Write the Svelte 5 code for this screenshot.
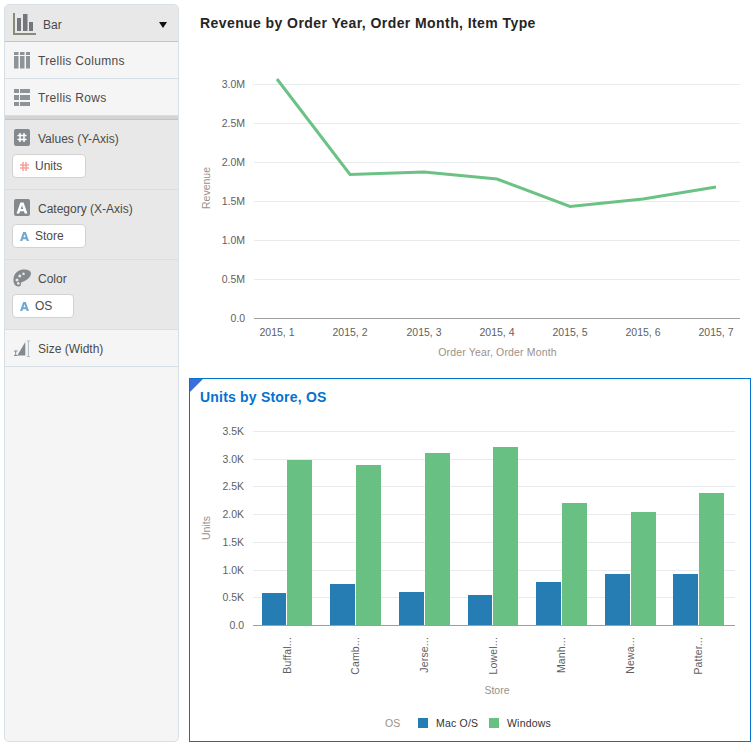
<script>
  const lineTicks = [['3.0M',84],['2.5M',123],['2.0M',162],['1.5M',201],['1.0M',240],['0.5M',279]];
  const linePts = [[277,79],[350,174.5],[424,172],[497,179],[570,206.5],[643,199],[716,187]];
  const lineLabels = ['2015, 1','2015, 2','2015, 3','2015, 4','2015, 5','2015, 6','2015, 7'];
  const barTicks = [['3.5K',431],['3.0K',459],['2.5K',486],['2.0K',514],['1.5K',542],['1.0K',570],['0.5K',597]];
  const stores = [
    {n:'Buffal...',x:262,w:24,b:593,g:460},
    {n:'Camb...',x:330,w:25,b:584,g:465},
    {n:'Jerse...',x:399,w:25,b:592,g:453},
    {n:'Lowel...',x:468,w:24,b:595,g:447},
    {n:'Manh...',x:536,w:25,b:582,g:503},
    {n:'Newa...',x:605,w:25,b:574,g:512},
    {n:'Patter...',x:673,w:25,b:574,g:493}
  ];
  const base = 625;
  const letterA = 'M0 9 3.2 0h2.6L9 9H6.700L6.100 7.200H2.900L2.300 9zM3.500 5.300h2L4.500 2.300z';
</script>

<div class="page">
  <aside class="side">
    <div class="head">
      <svg width="24" height="24" viewBox="0 0 24 24">
        <path d="M2 1v21h22" fill="none" stroke="#8a8a78" stroke-width="2"/>
        <path d="M5 6h4v13H5zM11 2h4.500v17H11zM17 10h4v9h-4z" fill="#73777c"/>
      </svg>
      <span class="head-t">Bar</span>
      <span class="caret"></span>
    </div>
    <div class="row">
      <svg width="16" height="17" viewBox="0 0 16 17" fill="#8d9396"><path d="M0 0h4.500v3H0zM6 0h4.500v3H6zM12 0h4v3h-4zM0 4h4.500v12.500H0zM6 4h4.500v12.500H6zM12 4h4v12.500h-4z"/></svg>
      <span class="wide">Trellis Columns</span>
    </div>
    <div class="row">
      <svg width="16" height="17" viewBox="0 0 16 17" fill="#8d9396"><path d="M0 0h5v4H0zM6 0h10v4H6zM0 6h5v5H0zM6 6h10v5H6zM0 13h5v4H0zM6 13h10v4H6z"/></svg>
      <span class="wide">Trellis Rows</span>
    </div>
    <div class="sep"></div>
    <div class="well">
      <div class="well-t">
        <svg width="16" height="17" viewBox="0 0 16 17"><rect width="16" height="17" rx="2" fill="#84898e"/><path d="M6 4v9M10 4v9M3.500 6.500h9M3.500 10.500h9" stroke="#fff" stroke-width="1.500"/></svg>
        <span>Values (Y-Axis)</span>
      </div>
      <div class="pill w74">
        <svg width="9" height="9" viewBox="0 0 9 9"><path d="M3 0v9M6 0v9M0 3h9M0 6h9" stroke="#f5a49a" stroke-width="1.600"/></svg>
        <span>Units</span>
      </div>
    </div>
    <div class="well">
      <div class="well-t">
        <svg width="16" height="17" viewBox="0 0 16 17"><rect width="16" height="17" rx="2" fill="#84898e"/><path d={letterA} transform="translate(2.500 3.500) scale(1.220)" fill="#fff" fill-rule="evenodd"/></svg>
        <span>Category (X-Axis)</span>
      </div>
      <div class="pill w74">
        <svg width="9" height="9" viewBox="0 0 9 9"><path d={letterA} fill="#6fa8d3" fill-rule="evenodd"/></svg>
        <span>Store</span>
      </div>
    </div>
    <div class="well">
      <div class="well-t">
        <svg class="pal" width="18" height="18" viewBox="0 0 18 18">
          <path fill-rule="evenodd" fill="#84898e" d="M11 .5C6.500.5 2 3 .8 8c-1 4.500 0 9.500 4.700 9.500 2.500 0 2.200-1.700 2.500-3 .3-1.500 1.500-1.500 3-2.200 3-1.200 7-4.300 7-8C18 2 15 .5 11 .5zM6.800 5.500a1.500 1.500 0 1 0 .01 0zM4 9.500a1.500 1.500 0 1 0 .01 0zM5.300 13a1.400 1.400 0 1 0 .01 0zM10.500 3.500a1.300 1.300 0 1 0 .01 0z"/>
        </svg>
        <span>Color</span>
      </div>
      <div class="pill w62">
        <svg width="9" height="9" viewBox="0 0 9 9"><path d={letterA} fill="#6fa8d3" fill-rule="evenodd"/></svg>
        <span>OS</span>
      </div>
    </div>
    <div class="row">
      <svg width="16" height="17" viewBox="0 0 16 17"><path d="M3.300 15.500 11.300 2v13.500z" fill="#84898e"/><path d="M12.800 1h3.200M14.400 1v15.500M12.800 16.500h3.200" stroke="#a9bcc6" fill="none"/><path d="M0 11h3.500M1.700 11v4.500M0 15.500h3.500" stroke="#84898e" fill="none"/></svg>
      <span>Size (Width)</span>
    </div>
  </aside>

  <main class="main">
    <section class="chart top">
      <h2 class="title">Revenue by Order Year, Order Month, Item Type</h2>
      <svg class="plot" width="566" height="378" viewBox="189 0 566 378">
        {#each lineTicks as t}
          <line x1="254" x2="740" y1={t[1]+0.5} y2={t[1]+0.5} class="grid"/>
          <text x="245" y={t[1]+4} class="tick" text-anchor="end">{t[0]}</text>
        {/each}
        <text x="245" y="322" class="tick" text-anchor="end">0.0</text>
        <line x1="254" x2="740" y1="318.500" y2="318.500" class="axis"/>
        <polyline points={linePts.map(p=>p.join(',')).join(' ')} fill="none" stroke="#6cc284" stroke-width="3"/>
        {#each lineLabels as l, i}
          <text x={linePts[i][0]} y="336" class="tick" text-anchor="middle">{l}</text>
        {/each}
        <text x="497.500" y="356" class="atitle wideT" text-anchor="middle">Order Year, Order Month</text>
        <text transform="translate(210 188) rotate(-90)" class="atitle" text-anchor="middle">Revenue</text>
      </svg>
    </section>

    <section class="chart panel">
      <span class="corner"></span>
      <h2 class="title blue">Units by Store, OS</h2>
      <svg class="plot" width="566" height="368" viewBox="189 378 566 368">
        {#each barTicks as t}
          <line x1="253" x2="735" y1={t[1]+0.5} y2={t[1]+0.5} class="grid"/>
          <text x="244" y={t[1]+4} class="tick" text-anchor="end">{t[0]}</text>
        {/each}
        <text x="244" y="629" class="tick" text-anchor="end">0.0</text>
        {#each stores as s}
          <rect x={s.x} y={s.b} width={s.w} height={base-s.b} fill="#267db3"/>
          <rect x={s.x+s.w+1} y={s.g} width="25" height={base-s.g} fill="#68c182"/>
          <text transform="translate({s.x+29} 637) rotate(-90)" class="tick wideT" text-anchor="end">{s.n}</text>
        {/each}
        <line x1="253" x2="735" y1="625.500" y2="625.500" class="axis"/>
        <text x="497" y="694" class="atitle" text-anchor="middle">Store</text>
        <text transform="translate(210 528) rotate(-90)" class="atitle" text-anchor="middle">Units</text>
        <text x="385" y="727" class="atitle">OS</text>
        <rect x="418" y="718" width="10" height="10" fill="#267db3"/>
        <text x="436" y="727" class="legend">Mac O/S</text>
        <rect x="489" y="718" width="10" height="10" fill="#68c182"/>
        <text x="507" y="727" class="legend">Windows</text>
      </svg>
    </section>
  </main>
</div>

<style>
  :global(body) { margin: 0; background: #fff; }
  .page {
    width: 755px;
    height: 746px;
    display: flex;
    box-sizing: border-box;
    padding: 4px 0 4px 4px;
    font-family: "Liberation Sans", Arial, sans-serif;
    overflow: hidden;
  }
  .side {
    width: 175px;
    height: 738px;
    box-sizing: border-box;
    border: 1px solid #d6dfe6;
    border-radius: 5px;
    background: #f5f5f5;
    overflow: hidden;
    flex: none;
    font-size: 12px;
    color: #4a4a4a;
  }
  .head {
    height: 37px;
    box-sizing: border-box;
    background: #e8e8e8;
    border-bottom: 1px solid #c4c4c4;
    display: flex;
    align-items: center;
    padding: 0 11px 0 7px;
  }
  .head-t { margin-left: 7px; flex: 1; padding-top: 4px; }
  .head svg { margin-top: 1px; }
  .caret {
    width: 0;
    height: 0;
    border-left: 4.500px solid transparent;
    border-right: 4.500px solid transparent;
    border-top: 6px solid #111;
    margin-top: 4px;
  }
  .row {
    height: 37px;
    box-sizing: border-box;
    border-bottom: 1px solid #d6dfe6;
    display: flex;
    align-items: center;
    gap: 8px;
    padding: 0 0 0 9px;
  }
  .row span { padding-top: 2px; }
  .row span.wide { letter-spacing: 0.3px; }
  .sep {
    height: 4px;
    box-sizing: border-box;
    background: #d4d4d4;
    border-bottom: 1px solid #c4c4c4;
  }
  .well {
    height: 70px;
    box-sizing: border-box;
    background: #e8e8e8;
    border-bottom: 1px solid #d6dfe6;
    padding: 9px 0 0 7px;
  }
  .well-t {
    display: flex;
    align-items: center;
    gap: 8px;
    height: 17px;
    padding-left: 2px;
  }
  .well-t span { padding-top: 2px; }
  .pal { margin: 0 -1px 0 -1px; flex: none; }
  .pill {
    margin-top: 8px;
    height: 24px;
    box-sizing: border-box;
    background: #fff;
    border: 1px solid #d2d2d2;
    border-radius: 4px;
    display: flex;
    align-items: center;
    gap: 6px;
    padding: 0 0 0 7px;
  }
  .pill svg { flex: none; margin-left: 0; }
  .w74 { width: 74px; }
  .w62 { width: 62px; }
  .main {
    margin-left: 10px;
    width: 562px;
    flex: none;
    margin-top: -4px;
  }
  .chart { position: relative; }
  .top { height: 378px; }
  .panel {
    height: 364px;
    box-sizing: border-box;
    border: 1px solid #0572ce;
    width: 562px;
  }
  .corner {
    position: absolute;
    left: 0;
    top: 0;
    width: 0;
    height: 0;
    border-top: 13px solid #3a6fd8;
    border-right: 13px solid transparent;
    z-index: 2;
  }
  .title {
    position: absolute;
    left: 11px;
    top: 15px;
    margin: 0;
    font-size: 14px;
    font-weight: 700;
    color: #252525;
    letter-spacing: 0.42px;
    z-index: 1;
  }
  .panel .title { top: 10px; left: 10px; letter-spacing: 0.2px; }
  .title.blue { color: #0572ce; }
  .plot { display: block; }
  .panel .plot { margin: -1px 0 0 -1px; }
  .grid { stroke: #e8eaee; stroke-width: 1; }
  .axis { stroke: #9e9e9e; stroke-width: 1; }
  .tick { font-size: 10.500px; fill: #5f5f5f; }
  .wideT { letter-spacing: 0.15px; }
  .atitle { font-size: 10.500px; fill: #9a918a; }
  .legend { font-size: 10.500px; fill: #333; letter-spacing: 0.2px; }
</style>
